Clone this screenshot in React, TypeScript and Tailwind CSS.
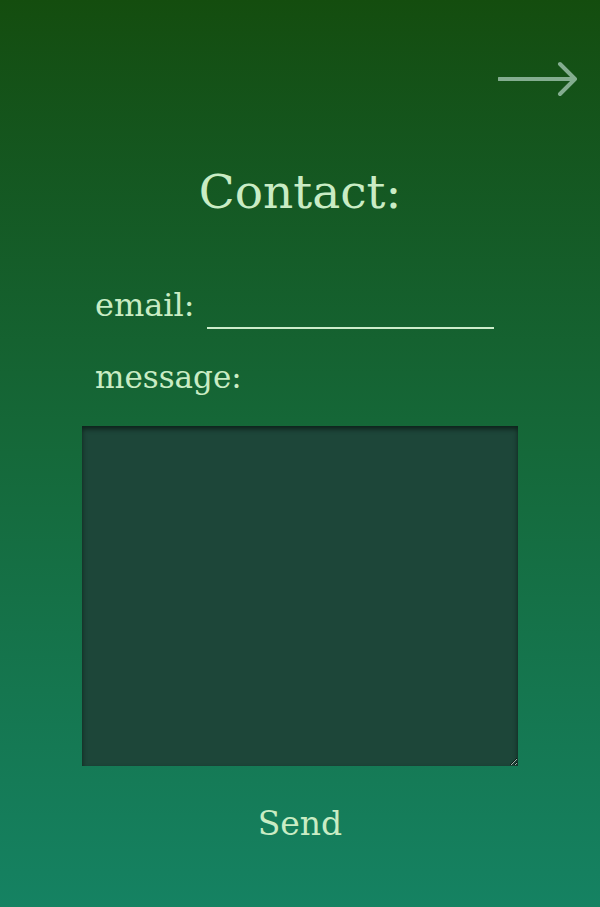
import React from 'react';

const serif = { fontFamily: '"DejaVu Serif", Georgia, serif' };

const App: React.FC = () => {
  return (
    <div
      className="w-[600px] h-[907px] bg-gradient-to-b from-[#144d0e] via-[#15693a] to-[#158262] text-[#c9ecc4] flex flex-col"
      style={serif}
    >
      <div className="flex justify-end pt-[60px] pr-[22px]">
        <svg width="80" height="38" viewBox="0 0 80 38" fill="none">
          <path d="M1 19 H76 M62 4 L77 19 L62 34" stroke="#84ad90" strokeWidth="4" strokeLinecap="round" strokeLinejoin="round" />
        </svg>
      </div>

      <h1 className="text-center text-[47px] leading-none mt-[70px]">Contact:</h1>

      <div className="flex items-end mt-[74px] pl-[95px]">
        <label className="text-[32px] leading-none">email:</label>
        <input
          type="email"
          className="ml-[12px] w-[287px] bg-transparent border-b-2 border-[#cdeccb] outline-none mb-[-8px] h-[30px]"
        />
      </div>

      <label className="pl-[95px] mt-[41px] text-[31px] leading-none">message:</label>

      <textarea className="mx-[82px] mt-[33px] h-[340px] w-[436px] bg-[#1d4639] shadow-[inset_0_3px_5px_rgba(0,0,0,0.55)] outline-none resize-y" />

      <button className="mt-[41px] text-[33px] leading-none self-center">Send</button>
    </div>
  );
};

export default App;
